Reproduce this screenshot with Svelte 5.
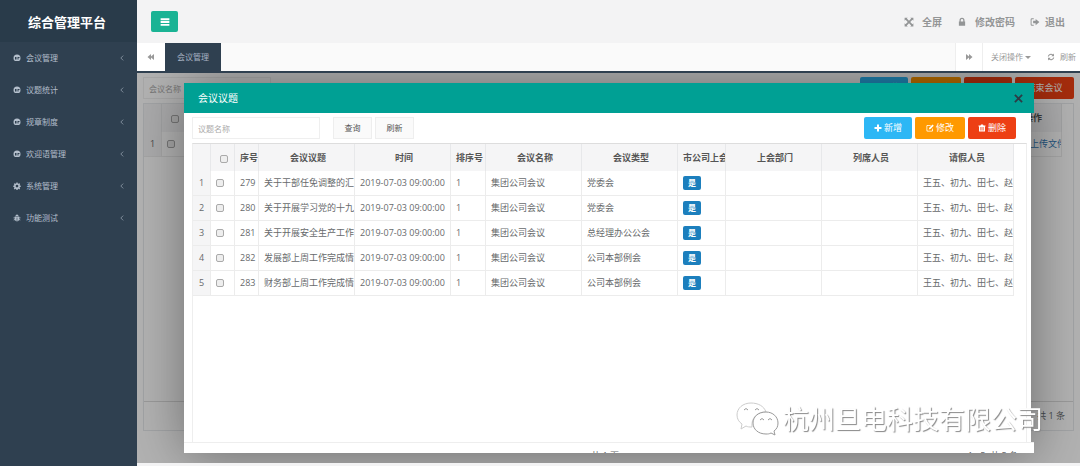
<script>
  const menu = [
    { label: '会议管理', icon: 'gauge' },
    { label: '议题统计', icon: 'gauge' },
    { label: '规章制度', icon: 'gauge' },
    { label: '欢迎语管理', icon: 'gauge' },
    { label: '系统管理', icon: 'gear' },
    { label: '功能测试', icon: 'bug' }
  ];

  const columns = ['会议议题', '时间', '排序号', '会议名称', '会议类型', '市公司上会', '上会部门', '列席人员', '请假人员'];

  const time = '2019-07-03 09:00:00';
  const absent = '王五、初九、田七、赵六';
  const rows = [
    { id: 279, topic: '关于干部任免调整的汇报', type: '党委会' },
    { id: 280, topic: '关于开展学习党的十九大', type: '党委会' },
    { id: 281, topic: '关于开展安全生产工作', type: '总经理办公公会' },
    { id: 282, topic: '发展部上周工作完成情况', type: '公司本部例会' },
    { id: 283, topic: '财务部上周工作完成情况', type: '公司本部例会' }
  ];

  let open = $state(true);
  let keyword = $state('');
</script>

{#snippet icon(name)}
  <svg class="icon" viewBox="0 0 16 16" aria-hidden="true">
    {#if name === 'gauge'}
      <path fill-rule="evenodd" d="M8 1a7 7 0 0 0-7 7c0 3 1 5 3 6h8c2-1 3-3 3-6a7 7 0 0 0-7-7zM4 6h3v5H4zM9 6h4v2h-2v3H9z" />
    {:else if name === 'gear'}
      <path fill-rule="evenodd" d="M6.8 1h2.4l.4 2 1.3.5L12.600 2.400l1.700 1.700-1.100 1.700.5 1.300 2 .4v2.200l-2 .4-.5 1.300 1.100 1.700-1.700 1.700-1.700-1.100-1.300.5-.4 2H6.800l-.4-2-1.300-.5-1.700 1.100-1.700-1.700 1.100-1.700-.5-1.300-2-.4V7.500l2-.4.5-1.300-1.100-1.700 1.700-1.700 1.700 1.100L6.400 3zM8 5.500a2.700 2.700 0 1 0 0 5.400 2.700 2.700 0 0 0 0-5.400z" />
    {:else if name === 'bug'}
      <path d="M5 4a3 3 0 0 1 6 0zM3.500 5h9v2H15v1.500h-2.500V10l2.500 2-1 1-2-1.500C11.500 13.500 10 15 8.600 15V7H7.400v8C6 15 4.500 13.500 4 11.500L2 13l-1-1 2.500-2V8.500H1V7h2.500z" />
    {:else if name === 'bars'}
      <path d="M1 2h14v3H1zM1 6.500h14v3H1zM1 11h14v3H1z" />
    {:else if name === 'back'}
      <path d="M8 2v5l6-5v12l-6-5v5L1 8z" />
    {:else if name === 'forward'}
      <path d="M8 2v5L2 2v12l6-5v5l7-6z" />
    {:else if name === 'expand'}
      <path d="M1 1h5L4.500 2.500 8 6l3.500-3.500L10 1h5v5l-1.500-1.500L10 8l3.500 3.500L15 10v5h-5l1.500-1.500L8 10l-3.500 3.500L6 15H1v-5l1.500 1.500L6 8 2.500 4.500 1 6z" />
    {:else if name === 'lock'}
      <path fill-rule="evenodd" d="M4 7V5a4 4 0 0 1 8 0v2h1v7H3V7zM6 7h4V5a2 2 0 0 0-4 0z" />
    {:else if name === 'exit'}
      <path d="M6 2H3a2 2 0 0 0-2 2v8a2 2 0 0 0 2 2h3v-1.500H3.500L2.500 12V4l1-.5H6zM9 3l6 5-6 5v-3H5V6h4z" />
    {:else if name === 'refresh'}
      <path d="M14 1v5.500H8.500l2-2A4.500 4.500 0 0 0 3.700 7H1.500a6.500 6.500 0 0 1 10.600-4zM2 15V9.500h5.500l-2 2A4.500 4.500 0 0 0 12.300 9h2.200a6.500 6.500 0 0 1-10.600 4z" />
    {:else if name === 'plus'}
      <path d="M6 1h4v5h5v4h-5v5H6v-5H1V6h5z" />
    {:else if name === 'edit'}
      <path d="M3 2h7L8.500 3.500h-5l-1 1v8l1 1h8l1-1V10L14 8.500V13a2 2 0 0 1-2 2H3a2 2 0 0 1-2-2V4a2 2 0 0 1 2-2zM13 1l2.500 2.500L9 10l-3.500 1 1-3.500z" />
    {:else if name === 'trash'}
      <path fill-rule="evenodd" d="M6 1h4l1 2h4v2h-1v10H2V5H1V3h4zM5 6v7h1.200V6zM7.400 6v7h1.200V6zM9.800 6v7H11V6z" />
    {/if}
  </svg>
{/snippet}

<div class="layout">
  <aside>
    <h1>综合管理平台</h1>
    <nav>
      {#each menu as item}
        <a href="#menu">
          {@render icon(item.icon)}
          <span>{item.label}</span>
          <svg class="chevron" viewBox="0 0 6 10" aria-hidden="true"><path d="M5 1 1 5l4 4" /></svg>
        </a>
      {/each}
    </nav>
  </aside>

  <div class="page">
    <header>
      <button class="toggle" aria-label="菜单">{@render icon('bars')}</button>
      <div class="user-links">
        <a href="#full">{@render icon('expand')}全屏</a>
        <a href="#password">{@render icon('lock')}修改密码</a>
        <a class="exit" href="#logout">{@render icon('exit')}退出</a>
      </div>
    </header>

    <div class="tabs">
      <button class="arrow" aria-label="向左">{@render icon('back')}</button>
      <a class="tab" href="#meeting">会议管理</a>
      <button class="arrow right" aria-label="向右">{@render icon('forward')}</button>
      <button class="close-menu">关闭操作<i class="caret"></i></button>
      <button class="reload">{@render icon('refresh')}刷新</button>
    </div>

    <main>
      <div class="search">
        <input class="query" aria-label="会议名称" placeholder="会议名称" />
        <div class="actions">
          <button class="btn info">{@render icon('plus')}新增</button>
          <button class="btn warn">{@render icon('edit')}修改</button>
          <button class="btn danger">{@render icon('trash')}删除</button>
          <button class="btn danger wide">结束会议</button>
        </div>
      </div>
      <div class="back-grid">
        <table>
          <colgroup><col class="c-num" /><col class="c-check" /><col /><col class="c-op" /></colgroup>
          <thead>
            <tr>
              <th></th>
              <th><input type="checkbox" aria-label="全选" /></th>
              <th></th>
              <th>操作</th>
            </tr>
          </thead>
          <tbody>
            <tr>
              <td class="num">1</td>
              <td><input type="checkbox" aria-label="1" /></td>
              <td></td>
              <td class="op"><a href="#upload">上传文件</a></td>
            </tr>
          </tbody>
        </table>
        <div class="back-pager">共 1 条</div>
      </div>

      {#if open}
        <div class="shade"></div>
        <div class="modal" role="dialog" aria-labelledby="modal-title">
          <div class="modal-head">
            <h2 id="modal-title">会议议题</h2>
            <button aria-label="关闭" onclick={() => (open = false)}>
              <svg viewBox="0 0 10 10"><path d="m1 1 8 8M9 1 1 9" /></svg>
            </button>
          </div>
          <div class="modal-body">
            <div class="toolbar">
              <input class="query" aria-label="议题名称" placeholder="议题名称" bind:value={keyword} />
              <button class="plain">查询</button>
              <button class="plain">刷新</button>
              <div class="actions">
                <button class="btn info">{@render icon('plus')}新增</button>
                <button class="btn warn">{@render icon('edit')}修改</button>
                <button class="btn danger">{@render icon('trash')}删除</button>
              </div>
            </div>
            <div class="grid">
              <table>
                <colgroup>
                  <col class="c-num" /><col class="c-id" /><col class="c-id" />
                  <col /><col /><col class="c-sort" /><col /><col />
                  <col class="c-flag" /><col /><col /><col />
                </colgroup>
                <thead>
                  <tr>
                    <th></th>
                    <th><input type="checkbox" aria-label="全选" /></th>
                    <th>序号</th>
                    {#each columns as column}
                      <th>{column}</th>
                    {/each}
                  </tr>
                </thead>
                <tbody>
                  {#each rows as row, i}
                    <tr>
                      <td class="num">{i + 1}</td>
                      <td><input type="checkbox" aria-label={row.topic} /></td>
                      <td>{row.id}</td>
                      <td>{row.topic}</td>
                      <td>{time}</td>
                      <td>1</td>
                      <td>集团公司会议</td>
                      <td>{row.type}</td>
                      <td><span class="badge">是</span></td>
                      <td></td>
                      <td></td>
                      <td>{absent}</td>
                    </tr>
                  {/each}
                </tbody>
              </table>
            </div>
          </div>
          <div class="pager">
            <span></span>
            <span>共 1 页</span>
            <span class="total">1 - 5&nbsp; 共 5 条</span>
          </div>
        </div>
      {/if}
    </main>
  </div>
</div>

<div class="watermark">
  <svg viewBox="0 0 44 36" aria-hidden="true">
    <path d="M16 2C8 2 2 7 2 14c0 4 2 7 5 9l-1 5 5-3c2 1 3 1 6 1C16 17 22 11 31 11 29 5 23 2 16 2z" />
    <path class="front" d="M31 11c-8 0-13 5-13 11s5 11 13 11c2 0 3 0 5-1l4 2-1-4c3-2 4-5 4-8 0-6-5-11-12-11z" />
    <path class="front" d="M9 9q2-3 4 0M20 9q2-3 4 0M25 19q2-3 4 0M33 19q2-3 4 0" />
  </svg>
  <span>杭州旦电科技有限公司</span>
</div>

<style>
  :global(body) {
    font-family: "Open Sans", "Noto Sans CJK SC", sans-serif;
    font-size: 9px;
    line-height: 12px;
    color: #676a6c;
    background: #f3f3f4;
  }

  button,
  input {
    font: inherit;
    color: inherit;
    margin: 0;
    padding: 0;
    border: 0;
    box-sizing: border-box;
  }

  button {
    background: none;
  }

  a {
    color: inherit;
    text-decoration: none;
  }

  .icon {
    width: 8px;
    height: 8px;
    fill: currentColor;
    flex: none;
  }

  .layout {
    display: flex;
    min-height: 100vh;
  }

  aside {
    width: 137px;
    flex: none;
    background: #2f4050;
    color: #b3becb;
  }

  h1 {
    margin: 0;
    height: 42px;
    padding-left: 28px;
    background: #293b4a;
    color: #fff;
    font-size: 13px;
    line-height: 45px;
  }

  nav a {
    display: flex;
    align-items: center;
    height: 32px;
    gap: 5px;
    padding: 0 13px;
    font-size: 8px;
  }

  .chevron {
    width: 4px;
    height: 6px;
    margin-left: auto;
    fill: none;
    stroke: currentColor;
  }

  .page {
    flex: 1;
    min-width: 0;
    display: flex;
    flex-direction: column;
  }

  header {
    display: flex;
    align-items: center;
    justify-content: space-between;
    height: 43px;
    padding: 0 15px 0 14px;
  }

  .toggle {
    display: flex;
    align-items: center;
    justify-content: center;
    width: 27px;
    height: 21px;
    border-radius: 2px;
    background: #1ab394;
    color: #fff;
  }

  .toggle .icon,
  .user-links .icon {
    width: 10px;
    height: 10px;
  }

  .user-links {
    display: flex;
    gap: 15px;
    color: #939596;
    font-size: 10px;
    font-weight: bold;
  }

  .user-links a {
    display: flex;
    align-items: center;
    gap: 8px;
  }

  .user-links .exit {
    gap: 5px;
  }

  .tabs {
    display: flex;
    height: 28px;
    background: #fafafa;
    border-bottom: 2px solid #2f4050;
    color: #999;
    font-size: 8px;
  }

  .arrow {
    display: flex;
    align-items: center;
    justify-content: center;
    width: 28px;
    background: #fff;
  }

  .arrow.right {
    margin-left: auto;
    border-left: 1px solid #eee;
    border-right: 1px solid #eee;
  }

  .tab {
    padding: 0 12px;
    background: #2f4050;
    color: #a7b1c2;
    line-height: 28px;
  }

  .close-menu,
  .reload {
    display: flex;
    align-items: center;
    gap: 2px;
    padding: 0 8px;
    background: #fff;
  }

  .reload {
    gap: 5px;
    padding-right: 4px;
  }

  .caret {
    border: 3px solid transparent;
    border-top-color: #999;
    border-bottom: 0;
  }

  main {
    position: relative;
    flex: 1;
    display: flex;
    flex-direction: column;
    margin-bottom: 3px;
    min-height: 360px;
    padding: 4px 6px 32px;
    background: #fff;
    overflow: hidden;
    box-sizing: border-box;
  }

  .search {
    display: flex;
    align-items: center;
    height: 22px;
    margin-bottom: 4px;
  }

  .query {
    width: 128px;
    height: 22px;
    padding: 0 5px;
    border: 1px solid #efefef;
    background: #fff;
    font-size: 8px;
  }

  .query::placeholder {
    color: #aaa;
  }

  .actions {
    display: flex;
    gap: 3px;
    margin-left: auto;
  }

  .btn {
    display: flex;
    align-items: center;
    justify-content: center;
    gap: 2px;
    width: 48px;
    height: 22px;
    border-radius: 2px;
    color: #fff;
    font-size: 9px;
  }

  .info {
    background: #2db7f5;
  }

  .warn {
    width: 50px;
    background: #f90;
  }

  .danger {
    background: #ed3f14;
  }

  .wide {
    width: 59px;
  }

  .back-grid {
    flex: 1;
    display: flex;
    flex-direction: column;
    border: 1px solid #e7eaec;
  }

  .back-grid table {
    width: calc(100% - 11px);
  }

  .back-pager {
    margin-top: auto;
    height: 28px;
    padding-right: 8px;
    border-top: 1px solid #ddd;
    line-height: 27px;
    text-align: right;
  }

  table {
    width: calc(100% - 12px);
    border-collapse: separate;
    border-spacing: 0;
    table-layout: fixed;
  }

  .c-num {
    width: 18px;
  }

  .c-check,
  .c-id {
    width: 24px;
  }

  .c-op {
    width: 60px;
  }

  .c-sort {
    width: 35px;
  }

  .c-flag {
    width: 48px;
  }

  th,
  td {
    box-sizing: border-box;
    padding: 0 0 0 5px;
    border-right: 1px solid #ececec;
    overflow: hidden;
    white-space: nowrap;
    text-align: left;
  }

  th {
    height: 28px;
    padding-right: 2px;
    border-color: #e7e8ea;
    background: #f5f5f6;
    color: #555;
    text-align: center;
  }

  td {
    height: 25px;
    border-bottom: 1px solid #ececec;
  }

  td a {
    color: #337ab7;
  }

  .op {
    padding-left: 28px;
  }

  .num {
    padding: 0;
    background: #f5f5f6;
    text-align: center;
  }

  input[type='checkbox'] {
    display: block;
    width: 8px;
    height: 8px;
    appearance: none;
    border: 1px solid #aaa;
    border-radius: 2px;
    background: #eee;
  }

  th input[type='checkbox'] {
    margin: 2px auto 0;
  }

  input[type='checkbox']:checked {
    background: #1c84c6;
  }

  .shade {
    position: absolute;
    inset: 0;
    background: rgba(0, 0, 0, 0.3);
  }

  .modal {
    position: absolute;
    inset: 10px 46px 10px 47px;
    display: flex;
    flex-direction: column;
    overflow: hidden;
  }

  /* The shadow sits on the shade so that it stays behind the dialog parts. */
  .shade::after {
    content: '';
    position: absolute;
    inset: 10px 49px 10px 47px;
    box-shadow: 1px 1px 50px rgba(0, 0, 0, 0.4);
  }

  .modal-head {
    display: flex;
    align-items: center;
    justify-content: space-between;
    height: 30px;
    flex: none;
    padding: 0 11px 0 14px;
    background: #00a094;
    color: #fff;
  }

  h2 {
    margin: 0;
    font-size: 10px;
    font-weight: normal;
  }

  .modal-head button {
    display: flex;
  }

  .modal-head svg {
    width: 9px;
    height: 9px;
    stroke: #2d3b45;
    stroke-width: 2;
    fill: none;
  }

  .modal-body {
    flex: 1;
    display: flex;
    flex-direction: column;
    margin-right: 3px;
    padding: 4px 4px 0 8px;
    background: #fff;
  }

  .toolbar {
    display: flex;
    gap: 3px;
    margin: 0 11px 4px 0;
  }

  .toolbar .query {
    margin-right: 10px;
  }

  .plain {
    width: 39px;
    border: 1px solid #eee;
    background: #fafafa;
    color: #555;
    font-size: 8px;
  }

  .grid {
    flex: 1;
    border: 1px solid #eee;
    border-bottom: 0;
    border-top-color: #ddd;
  }

  .grid th {
    height: 27px;
  }

  .badge {
    display: inline-block;
    width: 18px;
    border-radius: 2px;
    background: #1c7fbd;
    color: #fff;
    font-size: 8px;
    font-weight: bold;
    line-height: 14px;
    text-align: center;
    vertical-align: middle;
  }

  .pager {
    display: grid;
    grid-template-columns: 1fr 1fr 1fr;
    height: 11px;
    flex: none;
    margin: 0;
    padding: 0 16px 0 8px;
    border-top: 1px solid #eee;
    background: #fff;
    box-sizing: border-box;
    line-height: 26px;
    text-align: center;
    overflow: hidden;
  }

  .total {
    text-align: right;
  }

  .watermark {
    position: fixed;
    right: 37px;
    bottom: 29px;
    display: flex;
    align-items: center;
    gap: 4px;
    color: #fff;
    font-size: 26px;
    line-height: 36px;
    text-shadow: 1px 1px 1px #888;
    pointer-events: none;
  }

  .watermark svg {
    width: 44px;
    height: 36px;
    fill: #fff;
    stroke: #ccc;
    stroke-width: 1;
  }

  .watermark .front {
    stroke: #999;
  }
</style>
